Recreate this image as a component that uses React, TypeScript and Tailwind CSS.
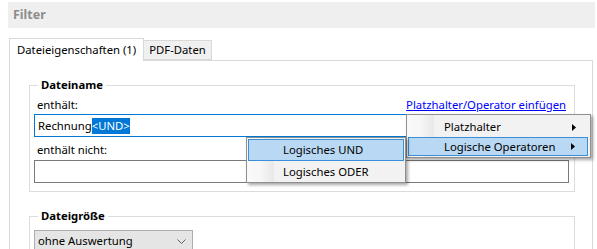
import React from "react";

const Arrow = () => (
  <svg width="4" height="7" viewBox="0 0 4 7" className="block">
    <path d="M0 0 L4 3.5 L0 7 Z" fill="#000" />
  </svg>
);

export default function App() {
  return (
    <div
      className="relative w-[597px] h-[249px] overflow-hidden bg-white text-[11.3px] leading-[16px] text-black"
      style={{ fontFamily: '"Noto Sans", "Open Sans", sans-serif' }}
    >
      <div className="flex flex-col">
        {/* Header */}
        <div className="shrink-0 mt-[2px] ml-[8px] mr-[2px] h-[26px] bg-[#efefef] flex items-center pl-[5px] font-bold text-[12.5px] text-[#8c8c8c]">
          Filter
        </div>

        {/* Tabs */}
        <div className="shrink-0 mt-[10px] ml-[9px] flex items-end relative z-10">
          <div className="h-[23px] -mb-px bg-white border-l border-t border-r border-[#d9d9d9] pl-[7px] pr-[7px] flex items-center">
            Dateieigenschaften (1)
          </div>
          <div className="h-[20px] bg-[#f0f0f0] border-t border-r border-b border-[#d9d9d9] px-[5px] flex items-center">
            PDF-Daten
          </div>
        </div>

        {/* Panel */}
        <div className="shrink-0 ml-[9px] w-[584px] h-[200px] border-l border-t border-r border-[#d9d9d9] pl-[19px] pr-[17px]">
          <fieldset className="mt-[16px] border border-[#dcdcdc] pl-[4px] pr-[5px] h-[115px]">
            <legend className="ml-[4px] px-[3px] font-bold leading-[16px]">Dateiname</legend>
            <div className="flex justify-between items-center h-[18px] mt-[3px] pl-[3px] pr-[3px]">
              <span>enthält:</span>
              <span className="text-[#0000ff] underline">Platzhalter/Operator einfügen</span>
            </div>
            <div className="h-[23px] border border-[#0078d7] flex items-center pl-[3px]">
              <span>Rechnung</span>
              <span className="bg-[#0078d7] text-white">&lt;UND&gt;</span>
            </div>
            <div className="h-[18px] mt-[4px] pl-[3px] flex items-center">enthält nicht:</div>
            <div className="mt-[1px] h-[23px] border border-[#7a7a7a]"></div>
          </fieldset>

          <fieldset className="mt-[16px] border border-[#dcdcdc] pl-[4px] pr-[5px] h-[60px]">
            <legend className="ml-[4px] px-[3px] font-bold leading-[16px]">Dateigröße</legend>
            <div className="mt-[6px] w-[159px] h-[22px] bg-[#e5e5e5] border border-[#adadad] flex items-center justify-between pl-[3px] pr-[6px]">
              <span>ohne Auswertung</span>
              <svg width="9" height="5" viewBox="0 0 9 5">
                <path d="M0.5 0.5 L4.5 4.5 L8.5 0.5" fill="none" stroke="#606060" strokeWidth="1" />
              </svg>
            </div>
          </fieldset>
        </div>
      </div>

      {/* Main context menu */}
      <div className="absolute left-[406px] top-[114px] w-[185px] h-[44px] bg-[#f2f2f2] border border-[#8f8f8f] shadow-[2px_2px_3px_rgba(0,0,0,0.35)] pt-[2px] px-[1px]">
        <div className="absolute left-0 top-0 bottom-0 w-[27px] bg-gradient-to-r from-[#fafafa] via-[#f6f6f6] to-[#e8e8e8]"></div>
        <div className="relative h-[20px] flex items-center pl-[35px] pr-[12px] justify-between border border-transparent">
          <span>Platzhalter</span>
          <Arrow />
        </div>
        <div className="relative h-[19px] flex items-center pl-[35px] pr-[12px] justify-between bg-[#b9d8f3] border border-[#3a90d8] mr-[1px]">
          <span>Logische Operatoren</span>
          <Arrow />
        </div>
      </div>

      {/* Submenu */}
      <div className="absolute left-[246px] top-[137px] w-[160px] h-[46px] bg-[#f2f2f2] border border-[#8f8f8f] shadow-[2px_2px_3px_rgba(0,0,0,0.35)] pt-[1px] px-[1px]">
        <div className="absolute left-0 top-0 bottom-0 w-[27px] bg-gradient-to-r from-[#fafafa] via-[#f6f6f6] to-[#e8e8e8]"></div>
        <div className="relative h-[22px] flex items-center pl-[34px] bg-[#b9d8f3] border border-[#3a90d8]">
          <span>Logisches UND</span>
        </div>
        <div className="relative h-[21px] flex items-center pl-[35px]">
          <span>Logisches ODER</span>
        </div>
      </div>
    </div>
  );
}
